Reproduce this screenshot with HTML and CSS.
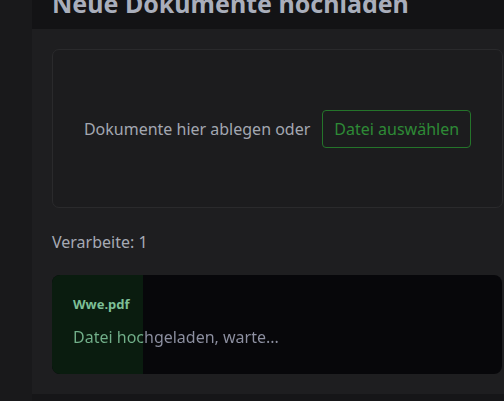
FILE: index.html
```html
<!DOCTYPE html>
<html lang="de">
<head>
<meta charset="utf-8">
<link rel="stylesheet" href="styles.css">
</head>
<body>
<div class="layout">
  <div class="sidebar"></div>
  <main class="main">
    <header class="header">
      <h2 class="title">Neue Dokumente hochladen</h2>
    </header>
    <section class="panel">
      <div class="dropzone">
        <span class="drop-text">Dokumente hier ablegen oder</span>
        <button class="pick">Datei auswählen</button>
      </div>
      <p class="count">Verarbeite: 1</p>
      <div class="job">
        <div class="progress" style="width: 91px"></div>
        <div class="job-body">
          <div class="job-name">Wwe.pdf</div>
          <div class="job-status">Datei hochgeladen, warte...</div>
        </div>
      </div>
    </section>
    <div class="footer"></div>
  </main>
</div>
</body>
</html>
```
FILE: styles.css
```css
html, body {
  margin: 0;
  height: 100%;
  background: #19191b;
  font-family: "Noto Sans", "Open Sans", sans-serif;
  overflow: hidden;
}
.layout {
  display: flex;
  height: 100%;
}
.sidebar {
  width: 32px;
  flex: none;
  background: #19191b;
}
.main {
  flex: 1;
  display: flex;
  flex-direction: column;
  background: #161618;
}
.header {
  height: 29px;
  background: #131315;
  padding-left: 20px;
  overflow: hidden;
}
.title {
  margin: -13px 0 0 0;
  font-size: 25px;
  line-height: 32px;
  font-weight: 700;
  color: #a9aebb;
  white-space: nowrap;
}
.panel {
  background: #1e1e20;
  padding: 20px 1px 20px 20px;
}
.dropzone {
  height: 157px;
  border: 1px solid #2a2a2c;
  border-radius: 7px;
  background: #1c1c1e;
  display: flex;
  align-items: center;
  justify-content: center;
  gap: 12px;
}
.drop-text {
  font-size: 16px;
  color: #a3a7b1;
}
.pick {
  height: 38px;
  padding: 0 11px;
  border: 1px solid #24742a;
  border-radius: 4px;
  background: transparent;
  color: #2e8a36;
  font-family: inherit;
  font-size: 16px;
}
.count {
  margin: 22px 0 21px;
  font-size: 16px;
  line-height: 24px;
  color: #a6aab4;
}
.job {
  position: relative;
  height: 99px;
  margin-right: 1px;
  border-radius: 8px;
  background: #07070a;
  overflow: hidden;
}
.progress {
  position: absolute;
  left: 0;
  top: 0;
  bottom: 0;
  background: #0a1c0f;
}
.job-body {
  position: relative;
  padding: 19px 21px 0;
}
.job-name {
  font-size: 13px;
  line-height: 20px;
  font-weight: 700;
  color: #7dbf97;
}
.job-status {
  margin-top: 11px;
  font-size: 16px;
  line-height: 24px;
  background: linear-gradient(to right, #72b08a 0 70px, #8e91a2 70px);
  -webkit-background-clip: text;
  background-clip: text;
  color: transparent;
  display: inline-block;
}
.footer {
  flex: 1;
  background: #161618;
}
```
